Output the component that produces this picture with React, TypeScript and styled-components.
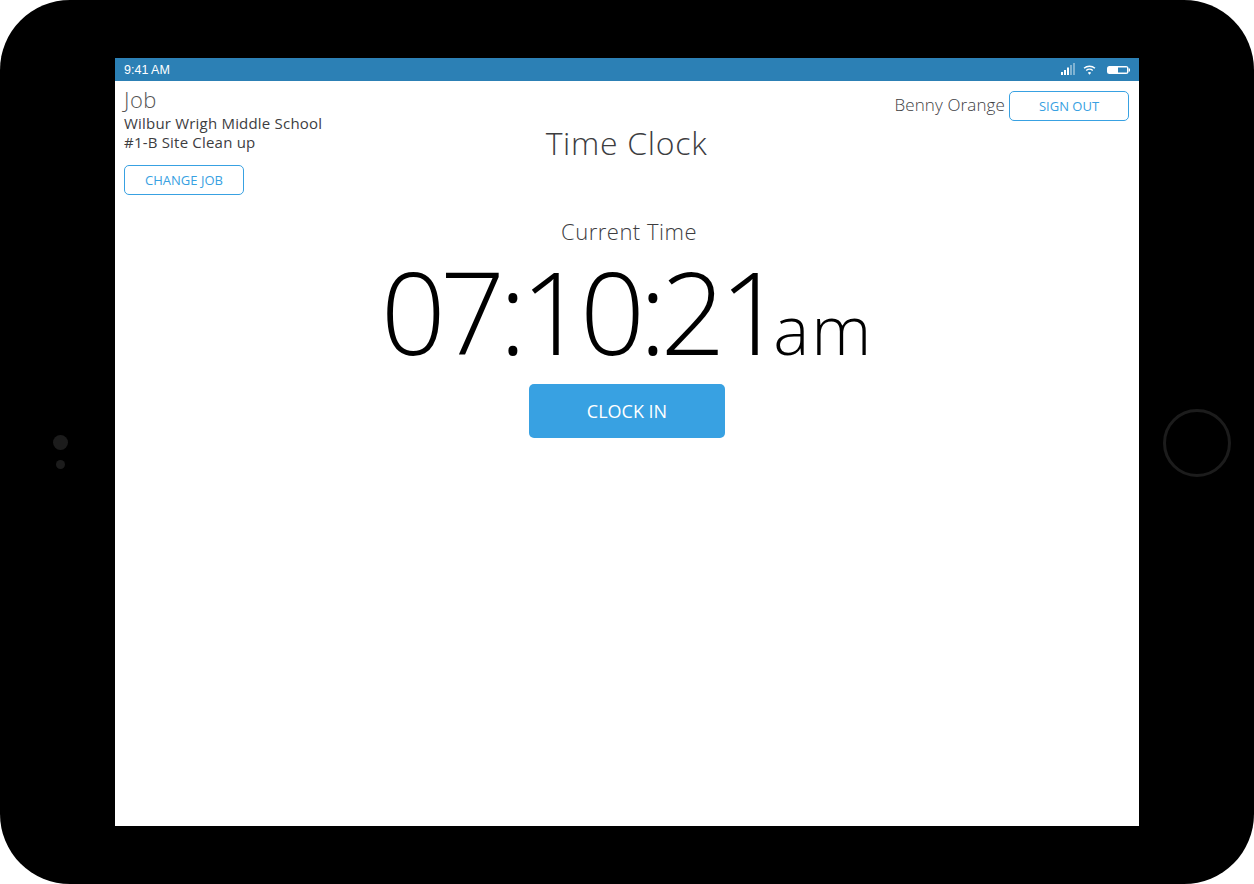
import { createGlobalStyle } from "styled-components";
import styled from "styled-components";

const GlobalStyle = createGlobalStyle`
  html, body {
    margin: 0;
    padding: 0;
    background: #fff;
  }
  * {
    box-sizing: border-box;
  }
`;

const FONT = `"Open Sans", "Noto Sans", sans-serif`;

const Device = styled.div`
  width: 1254px;
  height: 884px;
  background: #000;
  border-radius: 70px;
  display: grid;
  grid-template-columns: 115px 1024px 115px;
  grid-template-rows: 58px 768px 58px;
  overflow: hidden;
`;

const LeftBezel = styled.div`
  grid-row: 2;
  grid-column: 1;
  display: flex;
  flex-direction: column;
  align-items: center;
  justify-content: center;
  gap: 10px;
  padding: 0 0 0 6px;
  margin-top: 19px;
`;

const Dot = styled.div<{ $size: number }>`
  width: ${(p) => p.$size}px;
  height: ${(p) => p.$size}px;
  border-radius: 50%;
  background: #1c1c1c;
`;

const RightBezel = styled.div`
  grid-row: 2;
  grid-column: 3;
  display: flex;
  align-items: center;
  justify-content: center;
  margin-top: 2px;
`;

const HomeButton = styled.div`
  width: 68px;
  height: 68px;
  border-radius: 50%;
  border: 3px solid #1c1c1c;
  margin-left: 1px;
`;

const Screen = styled.div`
  grid-row: 2;
  grid-column: 2;
  background: #fff;
  display: flex;
  flex-direction: column;
  font-family: ${FONT};
`;

const StatusBar = styled.div`
  height: 23px;
  flex: none;
  background: #2c80b5;
  color: #fff;
  display: flex;
  align-items: center;
  justify-content: space-between;
  padding: 0 9px;
  font-family: "Liberation Sans", Arial, sans-serif;
  font-size: 12.5px;
`;

const StatusIcons = styled.div`
  display: flex;
  align-items: center;
`;

const SignalSvg = styled.svg`
  margin-right: 8px;
  margin-bottom: 1px;
`;

const WifiSvg = styled.svg`
  margin-right: 11px;
  margin-top: 1px;
`;

const Header = styled.div`
  display: grid;
  grid-template-columns: 1fr auto 1fr;
  padding: 0 10px 0 9px;
`;

const JobBlock = styled.div`
  display: flex;
  flex-direction: column;
  align-items: flex-start;
`;

const JobLabel = styled.div`
  font-size: 22px;
  font-weight: 300;
  line-height: 28px;
  margin: 4px 0 1px;
  letter-spacing: 0.5px;
  color: #555;
`;

const JobLine = styled.div`
  font-size: 15px;
  line-height: 19px;
  letter-spacing: 0.2px;
  color: #3d3d3f;
`;

const OutlineButton = styled.button`
  width: 120px;
  height: 30px;
  background: #fff;
  border: 1px solid #38a1e2;
  border-radius: 5px;
  color: #38a1e2;
  font-family: ${FONT};
  font-size: 13px;
  padding: 0;
`;

const ChangeJob = styled(OutlineButton)`
  margin-top: 13px;
`;

const Title = styled.h1`
  margin: 42px 0 0;
  font-size: 32px;
  font-weight: 300;
  line-height: 40px;
  color: #3d3d3f;
  letter-spacing: 0.7px;
`;

const UserBlock = styled.div`
  display: flex;
  justify-content: flex-end;
  align-items: center;
  gap: 4px;
  padding-top: 10px;
  align-self: start;
`;

const UserName = styled.div`
  font-size: 17px;
  font-weight: 300;
  letter-spacing: 0.12px;
  margin-bottom: 3px;
  color: #3d3d3f;
`;

const Clock = styled.div`
  display: flex;
  flex-direction: column;
  align-items: center;
`;

const CurrentLabel = styled.div`
  margin-top: 21px;
  padding-left: 4px;
  font-size: 22px;
  font-weight: 300;
  line-height: 30px;
  letter-spacing: 0.5px;
  color: #3d3d3f;
`;

const Time = styled.div`
  margin-top: 9px;
  font-size: 114px;
  font-weight: 300;
  line-height: 111px;
  letter-spacing: -5.8px;
  color: #000;
  white-space: nowrap;
`;

const Meridiem = styled.span`
  font-size: 68px;
  letter-spacing: 2px;
  margin-left: -6px;
`;

const ClockIn = styled.button`
  width: 196px;
  height: 54px;
  background: #38a1e2;
  border: 0;
  border-radius: 5px;
  color: #fff;
  font-family: ${FONT};
  font-size: 18px;
`;

const SignalIcon = () => (
  <SignalSvg width="14" height="12" viewBox="0 0 14 12">
    <rect x="0" y="9" width="2" height="3" fill="#fff" />
    <rect x="3" y="7" width="2" height="5" fill="#fff" />
    <rect x="6" y="4.5" width="2" height="7.5" fill="#fff" />
    <rect x="9" y="2" width="2" height="10" fill="#fff" opacity="0.4" />
    <rect x="12" y="0" width="2" height="12" fill="#fff" opacity="0.4" />
  </SignalSvg>
);

const WifiIcon = () => (
  <WifiSvg width="13" height="10" viewBox="0 0 14 11" fill="none" stroke="#fff" strokeWidth="1.6">
    <path d="M1 3.6 C4.4 .6 9.6 .6 13 3.6" />
    <path d="M3.4 6 C5.4 4.3 8.6 4.3 10.6 6" />
    <path d="M7 10.6 L5.2 8.4 C6.2 7.6 7.8 7.6 8.8 8.4 Z" fill="#fff" stroke="none" />
  </WifiSvg>
);

const BatteryIcon = () => (
  <svg width="23" height="8" viewBox="0 0 23 8">
    <rect x="0" y="0" width="21.5" height="8" rx="2.5" fill="#fff" />
    <rect x="11" y="1.5" width="9" height="5" fill="#2c80b5" />
    <rect x="21.7" y="2.5" width="1.3" height="3" fill="#fff" />
  </svg>
);

export default function App() {
  return (
    <Device>
      <GlobalStyle />
      <LeftBezel>
        <Dot $size={15} />
        <Dot $size={9} />
      </LeftBezel>
      <Screen>
        <StatusBar>
          <span>9:41 AM</span>
          <StatusIcons>
            <SignalIcon />
            <WifiIcon />
            <BatteryIcon />
          </StatusIcons>
        </StatusBar>
        <Header>
          <JobBlock>
            <JobLabel>Job</JobLabel>
            <JobLine>Wilbur Wrigh Middle School</JobLine>
            <JobLine>#1-B Site Clean up</JobLine>
            <ChangeJob>CHANGE JOB</ChangeJob>
          </JobBlock>
          <Title>Time Clock</Title>
          <UserBlock>
            <UserName>Benny Orange</UserName>
            <OutlineButton>SIGN OUT</OutlineButton>
          </UserBlock>
        </Header>
        <Clock>
          <CurrentLabel>Current Time</CurrentLabel>
          <Time>
            07:10:21<Meridiem>am</Meridiem>
          </Time>
          <ClockIn>CLOCK IN</ClockIn>
        </Clock>
      </Screen>
      <RightBezel>
        <HomeButton />
      </RightBezel>
    </Device>
  );
}
